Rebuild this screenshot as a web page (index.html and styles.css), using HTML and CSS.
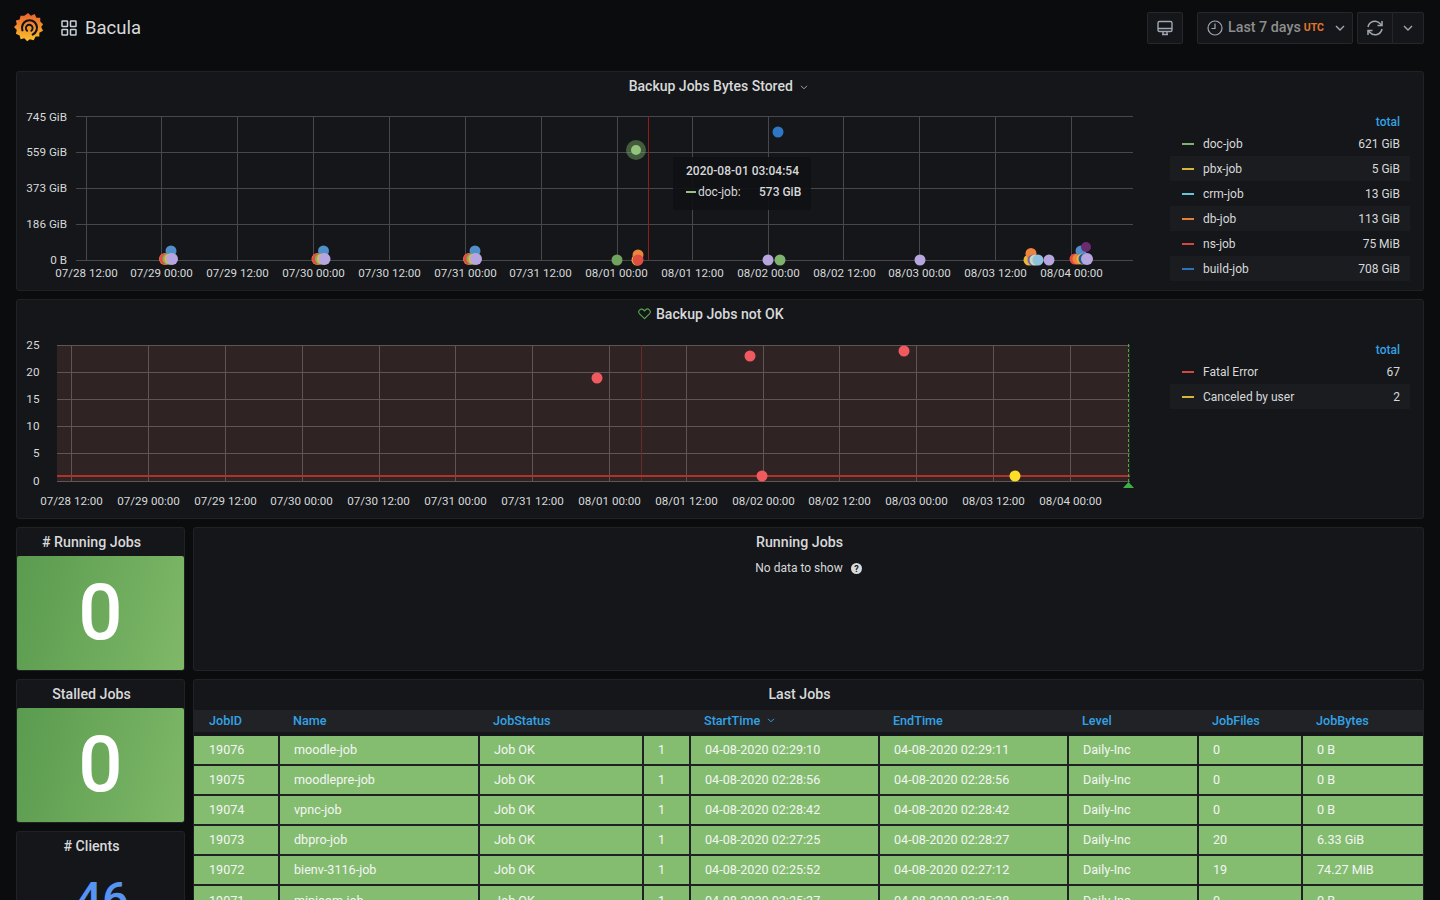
FILE: index.html
```html
<!DOCTYPE html>
<html lang="en">
<head>
<meta charset="utf-8">
<title>Bacula</title>
<link rel="stylesheet" href="styles.css">
</head>
<body>
<header class="topbar">
  <svg class="logo" width="30" height="32" viewBox="0 0 32 34">
    <defs><linearGradient id="lg" x1="0" y1="0" x2="0" y2="1"><stop offset="0" stop-color="#e8622f"/><stop offset="1" stop-color="#fbc02d"/></linearGradient></defs>
    <path fill="url(#lg)" d="M15 1l3 3 4-2 2 4 4 0 0 4 3 3-2 3 2 4-4 2 0 4-4 0-2 4-4-1-3 2-3-3-4 1-1-4-4-2 1-4-3-3 3-3-1-4 4-1 1-4 4 0z"/>
    <path fill="none" stroke="#111217" stroke-width="2.300" stroke-linecap="round" d="M9 19.500A8 8 0 1 1 20 24"/>
    <path fill="none" stroke="#111217" stroke-width="2" stroke-linecap="round" d="M14 20A3.600 3.600 0 1 1 18.500 20"/>
  </svg>
  <svg class="grid-ic" width="18" height="18" viewBox="0 0 18 18"><g fill="none" stroke="#c7d0d9" stroke-width="1.500"><rect x="2" y="2" width="5.500" height="5.500" rx=".6"/><rect x="10.500" y="2" width="5.500" height="5.500" rx=".6"/><rect x="2" y="10.500" width="5.500" height="5.500" rx=".6"/><rect x="10.500" y="10.500" width="5.500" height="5.500" rx=".6"/></g></svg>
  <h1 class="dash-name">Bacula</h1>
  <div class="tools">
    <button class="tbtn tv"><svg width="18" height="18" viewBox="0 0 18 18"><g fill="none" stroke="#9fa7b3" stroke-width="1.400"><rect x="2" y="2.500" width="14" height="10" rx="1.500"/><path d="M2 9.500h14M6 15.500h6M7 12.500v3M11 12.500v3"/></g></svg></button>
    <button class="tbtn picker">
      <svg width="16" height="16" viewBox="0 0 16 16"><g fill="none" stroke="#9fa7b3" stroke-width="1.200"><circle cx="8" cy="8" r="7"/><path d="M8 3.500V8.500H4.500"/></g></svg>
      <span class="range">Last 7 days</span><span class="utc">UTC</span>
      <svg class="chev" width="10" height="6" viewBox="0 0 10 6"><path d="M1 1l4 4 4-4" fill="none" stroke="#9fa7b3" stroke-width="1.400"/></svg>
    </button>
    <div class="split">
      <button class="tbtn refresh"><svg width="18" height="18" viewBox="0 0 18 18"><g fill="none" stroke="#9fa7b3" stroke-width="1.500"><path d="M2 8A7 7 0 0 1 14 4.500L16 6.500M16 10A7 7 0 0 1 4 13.500L2 11.500"/><path d="M16 2v4.500h-4.500M2 16v-4.500h4.500"/></g></svg></button>
      <button class="tbtn more"><svg width="10" height="6" viewBox="0 0 10 6"><path d="M1 1l4 4 4-4" fill="none" stroke="#9fa7b3" stroke-width="1.400"/></svg></button>
    </div>
  </div>
</header>

<main class="dash">
  <section class="panel wide graph">
    <div class="ptitle first">Backup Jobs Bytes Stored <svg class="tchev" width="8" height="5" viewBox="0 0 8 5"><path d="M1 .8l3 3 3-3" fill="none" stroke="#9fa7b3" stroke-width="1"/></svg></div>
    <div class="gbody">
      <svg class="chart" width="1153" height="190" viewBox="16 101 1153 190">
        <g class="grid">
          <path d="M76 116.500H1133M76 152.500H1133M76 188.500H1133M76 224.500H1133M76 260.500H1133"/>
          <path d="M86.500 116V260M161.500 116V260M237.500 116V260M313.500 116V260M389.500 116V260M465.500 116V260M541.500 116V260M617.500 116V260M692.500 116V260M768.500 116V260M843.500 116V260M919.500 116V260M995.500 116V260M1071.500 116V260"/>
        </g>
        <g class="ylab">
          <text x="67" y="121">745 GiB</text><text x="67" y="156">559 GiB</text><text x="67" y="192">373 GiB</text><text x="67" y="228">186 GiB</text><text x="67" y="264">0 B</text>
        </g>
        <g class="xlab">
          <text x="86.500" y="277">07/28 12:00</text><text x="161.500" y="277">07/29 00:00</text><text x="237.500" y="277">07/29 12:00</text><text x="313.500" y="277">07/30 00:00</text><text x="389.500" y="277">07/30 12:00</text><text x="465.500" y="277">07/31 00:00</text><text x="540.500" y="277">07/31 12:00</text><text x="616.500" y="277">08/01 00:00</text><text x="692.500" y="277">08/01 12:00</text><text x="768.500" y="277">08/02 00:00</text><text x="844.500" y="277">08/02 12:00</text><text x="919.500" y="277">08/03 00:00</text><text x="995.500" y="277">08/03 12:00</text><text x="1071.500" y="277">08/04 00:00</text>
        </g>
        <path class="cross" d="M648.500 116V260"/>
        <g class="dots">
          <g id="cluster">
            <circle cx="165" cy="259" r="6" fill="#ef843c"/><circle cx="165" cy="259" r="5.500" fill="#e24d42"/><circle cx="171" cy="251" r="5.500" fill="#508fca"/><circle cx="168" cy="259" r="5.500" fill="#7eb26d"/><circle cx="170" cy="259" r="5.500" fill="#eab839"/><circle cx="172" cy="259" r="6" fill="#b7a5e0"/>
          </g>
          <use href="#cluster" x="152.500"/><use href="#cluster" x="304"/>
          <circle cx="617" cy="260" r="5.500" fill="#6fa35f"/>
          <circle cx="637" cy="260" r="5.500" fill="#eab839"/><circle cx="638" cy="255" r="5.500" fill="#ef843c"/><circle cx="638" cy="260" r="5.500" fill="#e24d42"/>
          <circle cx="768" cy="260" r="5.500" fill="#b7a5e0"/><circle cx="780" cy="260" r="5.500" fill="#7eb26d"/>
          <circle cx="778" cy="132" r="5.500" fill="#2f77c4"/>
          <circle cx="920" cy="260" r="5.500" fill="#b7a5e0"/>
          <circle cx="1029" cy="260" r="5.500" fill="#eab839"/><circle cx="1031" cy="253.500" r="5.500" fill="#ef843c"/><circle cx="1033" cy="260" r="5.500" fill="#7e5fb0"/><circle cx="1035" cy="260" r="5.500" fill="#c5dcb8"/><circle cx="1038" cy="260" r="5.500" fill="#8fc0df"/><circle cx="1049" cy="260" r="5.500" fill="#b7a5e0"/>
          <circle cx="1075" cy="259" r="5.500" fill="#e24d42"/><circle cx="1078" cy="259" r="5.500" fill="#ef843c"/><circle cx="1081" cy="251" r="5.500" fill="#508fca"/><circle cx="1086" cy="247" r="5" fill="#6a2c70"/><circle cx="1082" cy="259" r="5.500" fill="#eab839"/><circle cx="1084" cy="259" r="5.500" fill="#1f5b9a"/><circle cx="1087" cy="259" r="6" fill="#b7a5e0"/>
          <circle cx="636" cy="150" r="10" fill="#7eb26d" fill-opacity=".45"/><circle cx="636" cy="150" r="5" fill="#93c47d"/>
        </g>
      </svg>
      <div class="legend">
        <div class="lhead">total</div>
        <div class="lrow"><i class="key c-doc"></i><span class="lname">doc-job</span><span class="lval">621 GiB</span></div>
        <div class="lrow alt"><i class="key c-pbx"></i><span class="lname">pbx-job</span><span class="lval">5 GiB</span></div>
        <div class="lrow"><i class="key c-crm"></i><span class="lname">crm-job</span><span class="lval">13 GiB</span></div>
        <div class="lrow alt"><i class="key c-db"></i><span class="lname">db-job</span><span class="lval">113 GiB</span></div>
        <div class="lrow"><i class="key c-ns"></i><span class="lname">ns-job</span><span class="lval">75 MiB</span></div>
        <div class="lrow alt"><i class="key c-build"></i><span class="lname">build-job</span><span class="lval">708 GiB</span></div>
      </div>
    </div>
    <div class="tip">
      <div class="tip-time">2020-08-01 03:04:54</div>
      <div class="tip-row"><i class="tip-key"></i><span class="tip-name">doc-job:</span><b class="tip-val">573 GiB</b></div>
    </div>
  </section>

  <section class="panel wide graph">
    <div class="ptitle notok"><svg class="heart" width="13" height="12" viewBox="0 0 14 12"><path d="M7 11L1.700 5.800A3 3 0 0 1 6.100 1.700L7 2.600l.9-.9a3 3 0 0 1 4.400 4.100z" fill="none" stroke="#56a64b" stroke-width="1.200"/></svg> Backup Jobs not OK</div>
    <div class="gbody">
      <svg class="chart" width="1153" height="190" viewBox="16 329 1153 190">
        <rect x="57" y="345" width="1073" height="136" fill="#2f2323"/>
        <g class="grid g2">
          <path d="M57 345.500H1130M57 372.500H1130M57 399.500H1130M57 426.500H1130M57 453.500H1130M57 481.500H1130"/>
          <path d="M71.500 345V481M148.500 345V481M225.500 345V481M302.500 345V481M379.500 345V481M455.500 345V481M532.500 345V481M609.500 345V481M686.500 345V481M763.500 345V481M839.500 345V481M916.500 345V481M993.500 345V481M1070.500 345V481"/>
        </g>
        <g class="ylab">
          <text x="39.500" y="349">25</text><text x="39.500" y="376">20</text><text x="39.500" y="403">15</text><text x="39.500" y="430">10</text><text x="39.500" y="457">5</text><text x="39.500" y="485">0</text>
        </g>
        <g class="xlab">
          <text x="71.500" y="505">07/28 12:00</text><text x="148.500" y="505">07/29 00:00</text><text x="225.500" y="505">07/29 12:00</text><text x="301.500" y="505">07/30 00:00</text><text x="378.500" y="505">07/30 12:00</text><text x="455.500" y="505">07/31 00:00</text><text x="532.500" y="505">07/31 12:00</text><text x="609.500" y="505">08/01 00:00</text><text x="686.500" y="505">08/01 12:00</text><text x="763.500" y="505">08/02 00:00</text><text x="839.500" y="505">08/02 12:00</text><text x="916.500" y="505">08/03 00:00</text><text x="993.500" y="505">08/03 12:00</text><text x="1070.500" y="505">08/04 00:00</text>
        </g>
        <path class="cross dim" d="M641.500 345V481"/>
        <path class="redline" d="M57 476H1130"/>
        <path class="anno" d="M1128.500 344V482"/>
        <path d="M1123 488L1128.500 482L1134 488z" fill="#3cb043"/>
        <g class="dots">
          <circle cx="597" cy="378" r="5.500" fill="#ef5a5f"/><circle cx="750" cy="356" r="5.500" fill="#ef5a5f"/><circle cx="904" cy="351" r="5.500" fill="#ef5a5f"/><circle cx="762" cy="476" r="5.500" fill="#ef5a5f"/><circle cx="1015" cy="476" r="5.500" fill="#fade2a"/>
        </g>
      </svg>
      <div class="legend">
        <div class="lhead">total</div>
        <div class="lrow"><i class="key c-ns"></i><span class="lname">Fatal Error</span><span class="lval">67</span></div>
        <div class="lrow alt"><i class="key c-pbx"></i><span class="lname">Canceled by user</span><span class="lval">2</span></div>
      </div>
    </div>
  </section>

  <section class="panel stat">
    <div class="ptitle small">#&nbsp;Running Jobs</div>
    <div class="bigval green">0</div>
  </section>
  <section class="panel running">
    <div class="ptitle small">Running Jobs</div>
    <div class="nodata">No data to show <svg width="11" height="11" viewBox="0 0 11 11"><circle cx="5.500" cy="5.500" r="5.500" fill="#d8d9da"/><text class="qm" x="5.500" y="8.500">?</text></svg></div>
  </section>

  <div class="side">
    <section class="panel stat">
      <div class="ptitle small">Stalled Jobs</div>
      <div class="bigval green">0</div>
    </section>
    <section class="panel stat clients">
      <div class="ptitle small">#&nbsp;Clients</div>
      <div class="bigval blue">46</div>
    </section>
  </div>

  <section class="panel jobs">
    <div class="ptitle small">Last Jobs</div>
    <table class="jt">
      <colgroup><col class="w1"><col class="w2"><col class="w3"><col class="w4"><col class="w5"><col class="w6"><col class="w7"><col class="w8"><col class="w9"></colgroup>
      <thead><tr><th>JobID</th><th>Name</th><th>JobStatus</th><th></th><th>StartTime <svg class="sort" width="8" height="5" viewBox="0 0 8 5"><path d="M1 .8l3 3 3-3" fill="none" stroke="#33a2e5" stroke-width="1"/></svg></th><th>EndTime</th><th>Level</th><th>JobFiles</th><th>JobBytes</th></tr></thead>
      <tbody>
        <tr><td>19076</td><td>moodle-job</td><td>Job OK</td><td>1</td><td>04-08-2020 02:29:10</td><td>04-08-2020 02:29:11</td><td>Daily-Inc</td><td>0</td><td>0 B</td></tr>
        <tr><td>19075</td><td>moodlepre-job</td><td>Job OK</td><td>1</td><td>04-08-2020 02:28:56</td><td>04-08-2020 02:28:56</td><td>Daily-Inc</td><td>0</td><td>0 B</td></tr>
        <tr><td>19074</td><td>vpnc-job</td><td>Job OK</td><td>1</td><td>04-08-2020 02:28:42</td><td>04-08-2020 02:28:42</td><td>Daily-Inc</td><td>0</td><td>0 B</td></tr>
        <tr><td>19073</td><td>dbpro-job</td><td>Job OK</td><td>1</td><td>04-08-2020 02:27:25</td><td>04-08-2020 02:28:27</td><td>Daily-Inc</td><td>20</td><td>6.33 GiB</td></tr>
        <tr><td>19072</td><td>bienv-3116-job</td><td>Job OK</td><td>1</td><td>04-08-2020 02:25:52</td><td>04-08-2020 02:27:12</td><td>Daily-Inc</td><td>19</td><td>74.27 MiB</td></tr>
        <tr><td>19071</td><td>minicom-job</td><td>Job OK</td><td>1</td><td>04-08-2020 02:25:37</td><td>04-08-2020 02:25:38</td><td>Daily-Inc</td><td>0</td><td>0 B</td></tr>
      </tbody>
    </table>
  </section>
</main>
</body>
</html>
```

FILE: styles.css
```css
* { box-sizing: border-box; }
html, body { margin: 0; height: 900px; overflow: hidden; }
body { background: #0b0c0e; color: #d8d9da; font-family: Roboto, "Liberation Sans", sans-serif; font-size: 13px; padding: 0 16px; }

.topbar { display: flex; align-items: center; height: 71px; padding-bottom: 16px; }
.logo { margin-left: -2px; flex: none; }
.grid-ic { margin-left: 16px; }
.dash-name { margin: 0 0 0 7px; font-size: 18.500px; font-weight: 400; color: #d8d9da; line-height: 24px; }
.tools { margin-left: auto; display: flex; align-items: center; }
.tbtn { height: 32px; background: #141619; border: 1px solid #25272b; border-radius: 2px; display: flex; align-items: center; justify-content: center; padding: 0; font-family: inherit; }
.tv { width: 36px; margin-right: 14px; }
.picker { width: 156px; margin-right: 4px; justify-content: flex-start; padding-left: 9px; }
.range { margin-left: 5px; font-size: 14.300px; font-weight: 500; color: #8e8e8e; position: relative; top: -1px; }
.utc { margin-left: 3px; font-size: 10.500px; font-weight: 700; color: #e0752d; }
.chev { margin-left: 11px; }
.split { display: flex; }
.refresh { width: 35px; border-right: 0; border-radius: 2px 0 0 2px; }
.more { width: 32px; border-radius: 0 2px 2px 0; }

.dash { display: grid; grid-template-columns: 169px 1231px; grid-auto-rows: min-content; gap: 8px; }
.panel { background: #141619; border: 1px solid #202226; border-radius: 3px; position: relative; }
.wide { grid-column: 1 / 3; height: 220px; }
.ptitle { height: 28px; padding-right: 18px; display: flex; align-items: center; justify-content: center; font-size: 14px; font-weight: 500; color: #d8d9da; white-space: pre; }
.ptitle.small { font-size: 14.200px; }
.graph .ptitle { height: 29px; padding-bottom: 1px; }
.graph .ptitle.notok { padding-right: 18px; font-size: 14.100px; }
.graph .ptitle.first { padding: 0 3px 1px 0; }
.tchev { margin-left: 4px; margin-top: 2px; }
.heart { margin-right: 1px; }
.gbody { display: flex; }
.chart { display: block; flex: none; margin-left: -1px; font-family: Roboto, "Liberation Sans", sans-serif; }
.grid path { stroke: #46484c; stroke-width: 1; fill: none; }
.g2 path { stroke: #5f5555; }
.ylab text { text-anchor: end; font-size: 11.700px; fill: #d8d9da; }
.xlab text { text-anchor: middle; font-size: 11.600px; fill: #d8d9da; }
.cross { stroke: #8f1d1d; stroke-width: 1; }
.cross.dim { stroke: #6b2a2a; }
.redline { stroke: #b03329; stroke-width: 2; }
.anno { stroke: #3cb043; stroke-width: 1; stroke-dasharray: 3 2; }

.legend { width: 240px; margin-left: 1px; margin-top: 11px; }
.lhead { height: 19px; padding-right: 10px; text-align: right; font-size: 12px; font-weight: 500; color: #33a2e5; line-height: 20px; }
.lrow { height: 25px; display: flex; align-items: center; padding: 0 10px 0 12px; font-size: 12px; color: #d8d9da; }
.lrow.alt { background: #1a1c20; }
.key { width: 12px; height: 2px; margin-right: 9px; flex: none; }
.c-doc { background: #7eb26d; }
.c-pbx { background: #d9b53a; }
.c-crm { background: #65c5db; }
.c-db { background: #e5803a; }
.c-ns { background: #cf4a40; }
.c-build { background: #2a73bd; }
.lval { margin-left: auto; }

.tip { position: absolute; left: 656px; top: 85px; width: 138px; height: 53px; padding: 6px 0 0 13px; background: rgba(16, 17, 20, .92); border-radius: 2px; font-size: 12px; font-weight: 500; color: #d8d9da; }
.tip-time { line-height: 16px; }
.tip-row { display: flex; align-items: center; margin-top: 5px; line-height: 16px; }
.tip-key { width: 10px; height: 2.500px; background: #93c47d; margin-right: 2px; }
.tip-name { font-weight: 400; width: 61px; }
.tip-val { font-weight: 500; }

.stat { height: 144px; }
.bigval { height: 114px; display: flex; align-items: center; justify-content: center; font-size: 78px; font-weight: 500; line-height: 1; }
.green { background: linear-gradient(105deg, #5a9b4f, #7fb868); color: #fff; border-radius: 2px; }
.blue { color: #5794f2; }
.clients { height: 200px; }
.clients .bigval { height: 76px; font-size: 47px; padding-left: 3px; }
.running { height: 144px; }
.nodata { display: flex; align-items: center; justify-content: center; gap: 8px; margin-top: 3px; font-size: 12px; color: #d8d9da; line-height: 18px; }
.qm { text-anchor: middle; font-size: 9px; font-weight: 700; fill: #141619; }

.side { display: flex; flex-direction: column; gap: 8px; }
.jobs { height: 260px; overflow: hidden; }
.jobs .ptitle { height: 30px; padding-bottom: 2px; }
.jt { border-collapse: separate; border-spacing: 0; table-layout: fixed; width: 1229px; font-size: 12.600px; }
.w1 { width: 86px; } .w2 { width: 200px; } .w3 { width: 164px; } .w4 { width: 47px; } .w5 { width: 189px; } .w6 { width: 189px; } .w7 { width: 130px; } .w8 { width: 104px; } .w9 { width: 120px; }
.jt th { height: 26px; padding: 0 0 2px 13px; background: #202226; background-clip: padding-box; color: #33a2e5; font-weight: 500; text-align: left; font-size: 12.600px; border-bottom: 4px solid transparent; }
.jt th:first-child { padding-left: 15px; }
.sort { margin-left: 4px; vertical-align: 2px; }
.jt td { height: 30px; padding: 0 0 2px 14px; background: #84bd70; color: #f4f5f5; border-right: 2px solid #1f2124; border-bottom: 2px solid #1f2124; white-space: nowrap; overflow: hidden; }
.jt td:first-child { padding-left: 15px; }
.jt td:last-child { border-right: 0; }
.jt tbody tr:last-child td { border-bottom: 0; }
```
